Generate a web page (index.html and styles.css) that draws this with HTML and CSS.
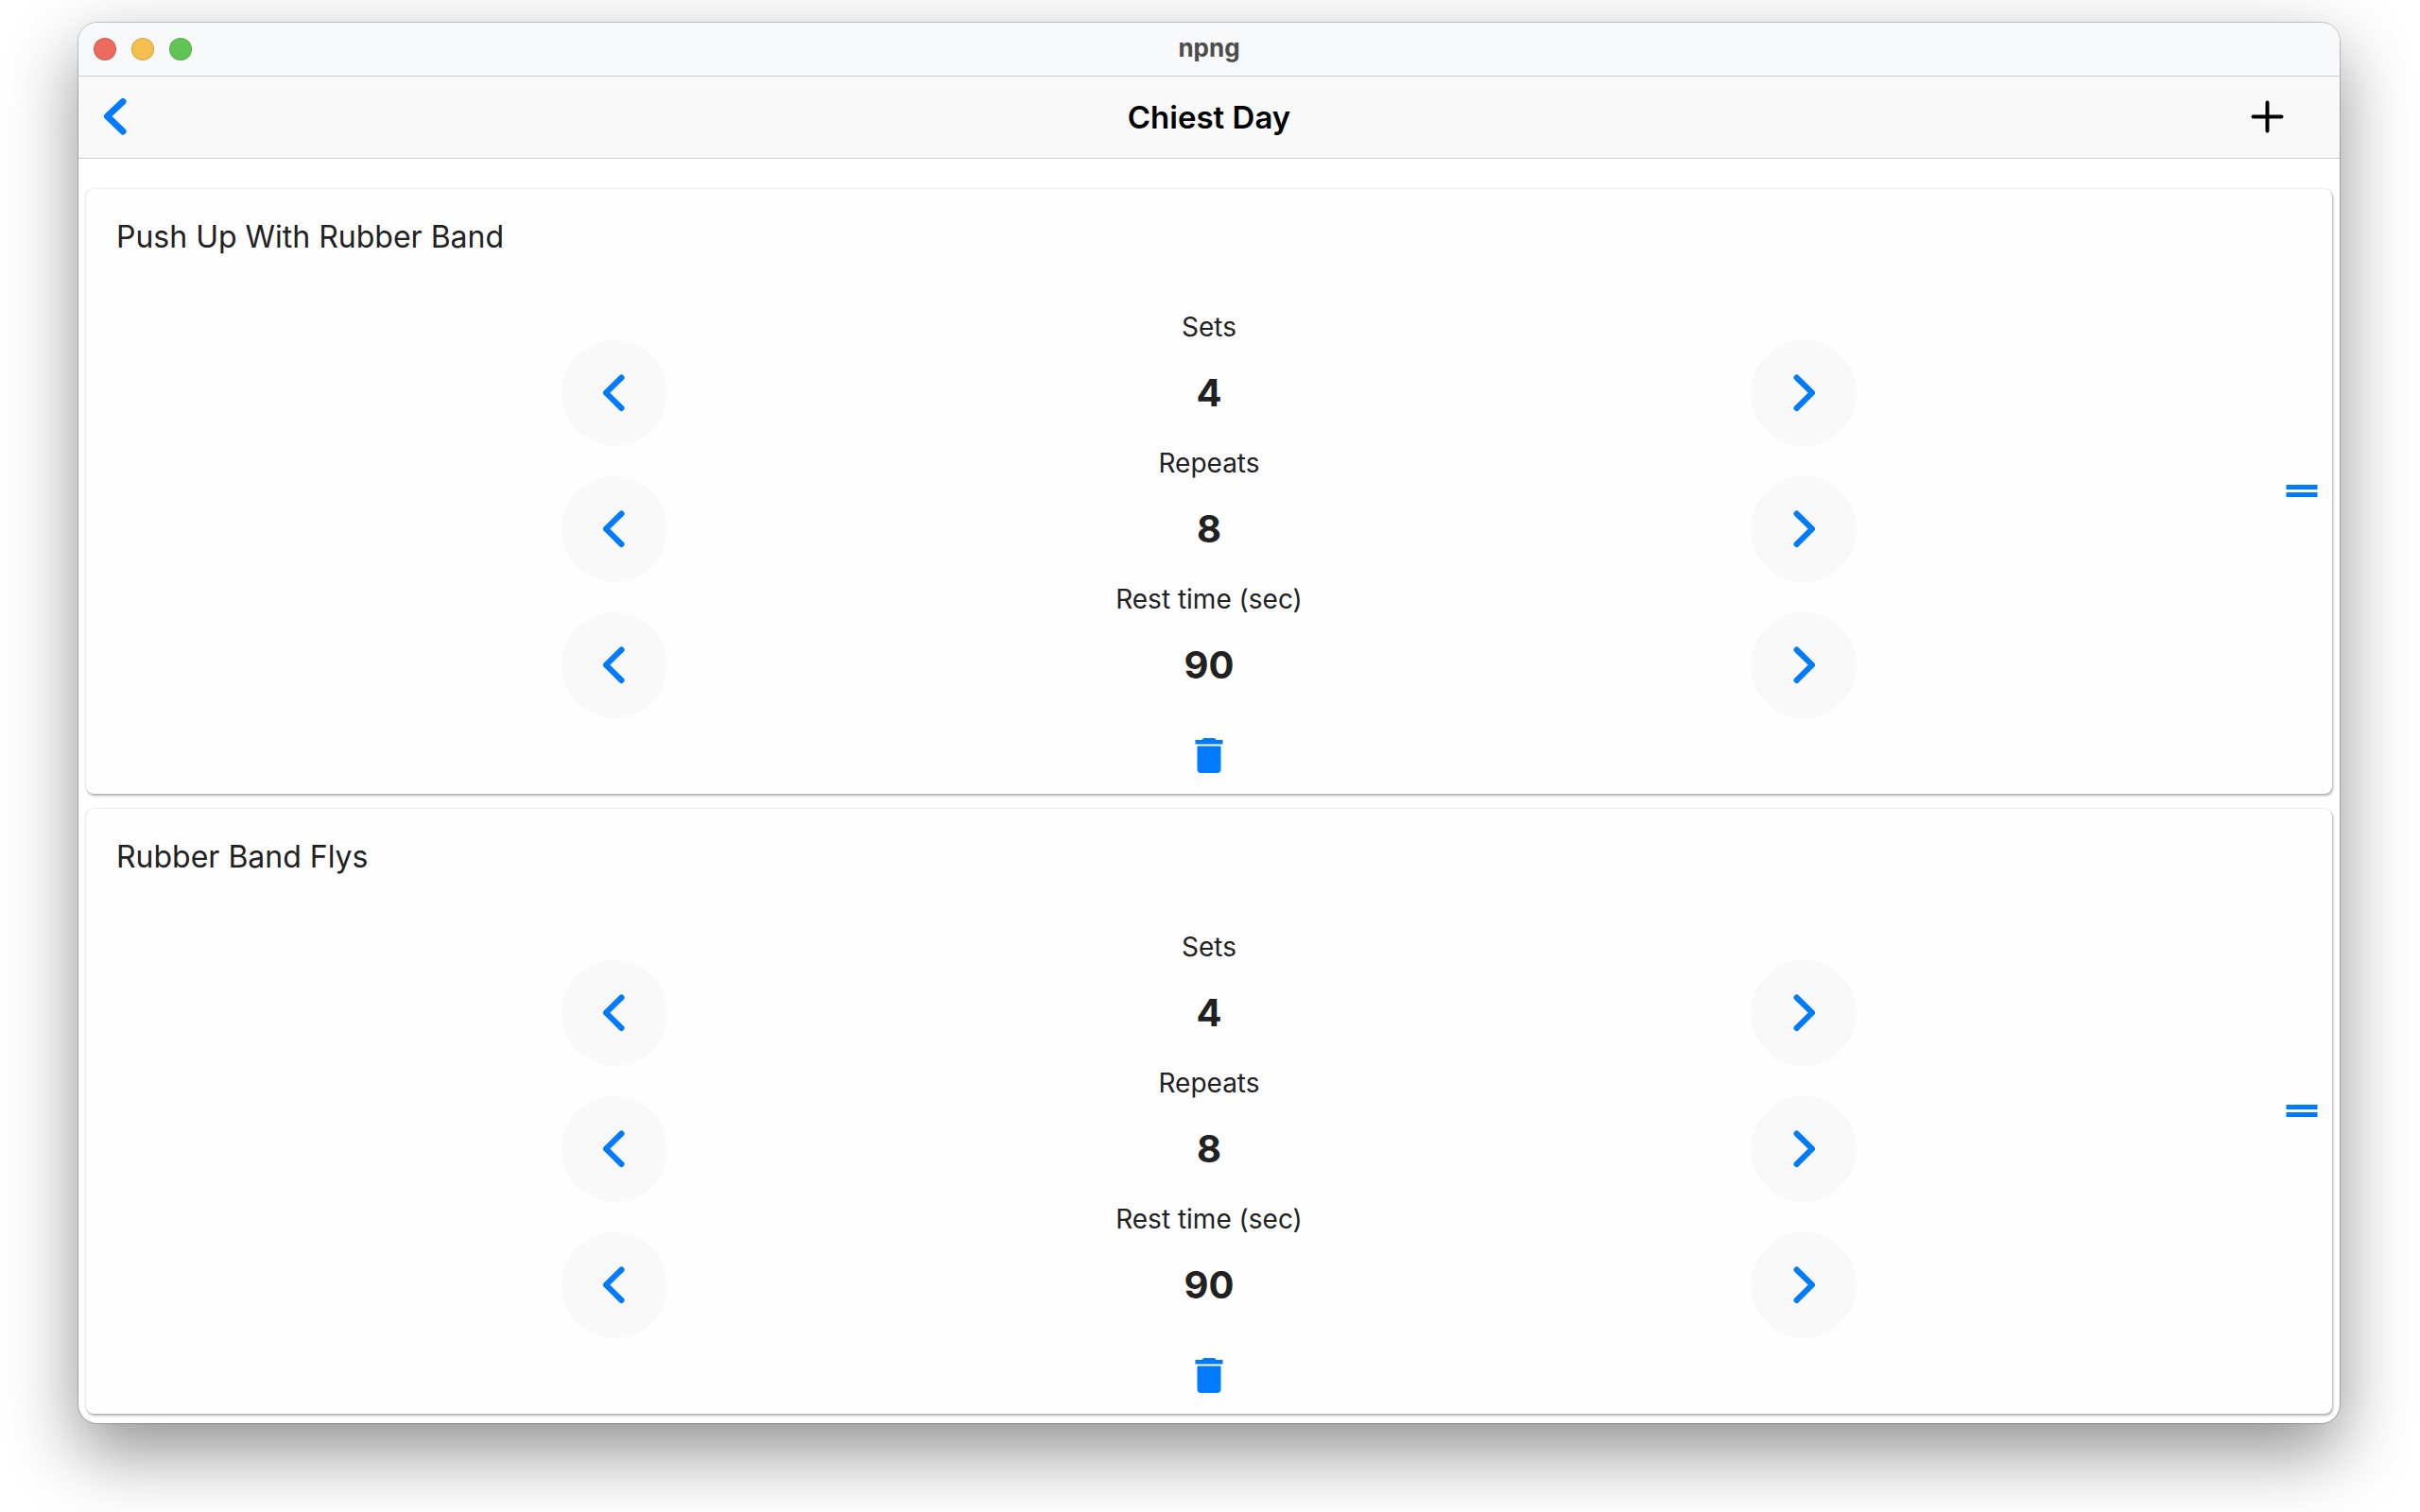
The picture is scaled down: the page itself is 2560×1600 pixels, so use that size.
FILE: index.html
```html
<!DOCTYPE html>
<html lang="en">
<head>
<meta charset="utf-8">
<meta name="viewport" content="width=device-width, initial-scale=1">
<title>npng</title>
<link rel="stylesheet" href="styles.css">
</head>
<body>
<svg class="sprite" aria-hidden="true">
  <symbol id="back" viewBox="0 0 40 40"><path d="M27 3.500 10.500 19 27 35"/></symbol>
  <symbol id="left" viewBox="0 0 40 40"><path d="M27.500 3.500 11 19.700 27.500 36"/></symbol>
  <symbol id="right" viewBox="0 0 40 40"><path d="M12.500 3.500 29 19.700 12.500 36"/></symbol>
  <symbol id="plus" viewBox="0 0 40 40"><path d="M19.500 4.500V34.500M4.500 19.500H34.500"/></symbol>
  <symbol id="trash" viewBox="0 0 40 40"><path d="M5.500 5H12.500Q13.500 3 15 3H25Q26.500 3 27.500 5H34.500V9.500H5.500ZM7.500 11.500H32.500V36Q32.500 40 28.500 40H11.500Q7.500 40 7.500 36Z"/></symbol>
  <symbol id="grip" viewBox="0 0 40 40"><path d="M3.500 13H36.500V18H3.500ZM3.500 21H36.500V26H3.500Z"/></symbol>
</svg>
<div class="window">
  <div class="titlebar">
    <div class="lights">
      <button class="light close" aria-label="Close"></button>
      <button class="light minimize" aria-label="Minimize"></button>
      <button class="light zoom" aria-label="Zoom"></button>
    </div>
    <span class="app-name">npng</span>
  </div>
  <header class="navbar">
    <button class="icon-button back" aria-label="Back"><svg class="icon stroke heavy"><use href="#back"/></svg></button>
    <h1 class="page-title">Chiest Day</h1>
    <button class="icon-button add" aria-label="Add"><svg class="icon stroke thin"><use href="#plus"/></svg></button>
  </header>
  <main class="content">
    <section class="card">
      <div class="card-body">
        <h2 class="exercise">Push Up With Rubber Band</h2>
        <div class="field-label">Sets</div>
        <div class="stepper" role="group" aria-label="Sets">
          <button class="step" aria-label="Decrease"><svg class="icon stroke"><use href="#left"/></svg></button>
          <output class="value">4</output>
          <button class="step" aria-label="Increase"><svg class="icon stroke"><use href="#right"/></svg></button>
        </div>
        <div class="field-label">Repeats</div>
        <div class="stepper" role="group" aria-label="Repeats">
          <button class="step" aria-label="Decrease"><svg class="icon stroke"><use href="#left"/></svg></button>
          <output class="value">8</output>
          <button class="step" aria-label="Increase"><svg class="icon stroke"><use href="#right"/></svg></button>
        </div>
        <div class="field-label">Rest time (sec)</div>
        <div class="stepper" role="group" aria-label="Rest time">
          <button class="step" aria-label="Decrease"><svg class="icon stroke"><use href="#left"/></svg></button>
          <output class="value">90</output>
          <button class="step" aria-label="Increase"><svg class="icon stroke"><use href="#right"/></svg></button>
        </div>
        <button class="icon-button delete" aria-label="Delete"><svg class="icon"><use href="#trash"/></svg></button>
      </div>
      <button class="icon-button handle" aria-label="Reorder"><svg class="icon"><use href="#grip"/></svg></button>
    </section>
    <section class="card">
      <div class="card-body">
        <h2 class="exercise">Rubber Band Flys</h2>
        <div class="field-label">Sets</div>
        <div class="stepper" role="group" aria-label="Sets">
          <button class="step" aria-label="Decrease"><svg class="icon stroke"><use href="#left"/></svg></button>
          <output class="value">4</output>
          <button class="step" aria-label="Increase"><svg class="icon stroke"><use href="#right"/></svg></button>
        </div>
        <div class="field-label">Repeats</div>
        <div class="stepper" role="group" aria-label="Repeats">
          <button class="step" aria-label="Decrease"><svg class="icon stroke"><use href="#left"/></svg></button>
          <output class="value">8</output>
          <button class="step" aria-label="Increase"><svg class="icon stroke"><use href="#right"/></svg></button>
        </div>
        <div class="field-label">Rest time (sec)</div>
        <div class="stepper" role="group" aria-label="Rest time">
          <button class="step" aria-label="Decrease"><svg class="icon stroke"><use href="#left"/></svg></button>
          <output class="value">90</output>
          <button class="step" aria-label="Increase"><svg class="icon stroke"><use href="#right"/></svg></button>
        </div>
        <button class="icon-button delete" aria-label="Delete"><svg class="icon"><use href="#trash"/></svg></button>
      </div>
      <button class="icon-button handle" aria-label="Reorder"><svg class="icon"><use href="#grip"/></svg></button>
    </section>
  </main>
</div>
</body>
</html>
```
FILE: styles.css
```css
* { box-sizing: border-box; }

body {
  margin: 0;
  padding: 24px 85px 94px 83px;
  background: #fff;
  color: #212121;
  font-family: Inter, "Liberation Sans", sans-serif;
}

button {
  border: 0;
  padding: 0;
  background: none;
  color: #007aff;
  cursor: pointer;
}

h1, h2 { margin: 0; }

.sprite { display: none; }

.window {
  border-radius: 20px;
  background: #fff;
  box-shadow: 0 0 0 1px rgba(0, 0, 0, 0.2), 0 30px 76px rgba(0, 0, 0, 0.44);
  overflow: hidden;
}

.titlebar, .navbar {
  display: grid;
  grid-template-columns: 1fr auto 1fr;
  align-items: center;
}

.titlebar {
  height: 57px;
  padding: 0 16px;
  background: #f8f9fb;
  border-bottom: 1px solid #cfcfcf;
}

.lights { display: flex; gap: 16px; }

.light {
  width: 24px;
  height: 24px;
  border-radius: 50%;
  border: 1px solid rgba(0, 0, 0, 0.12);
}
.close { background: #ec6a5e; }
.minimize { background: #f4bf4f; }
.zoom { background: #61c554; }

.app-name {
  padding-bottom: 2px;
  font-size: 26px;
  line-height: 32px;
  font-weight: 700;
  color: #4c4c4c;
}

.navbar {
  height: 87px;
  padding: 0 20px;
  background: #f9f9f9;
  border-bottom: 1px solid #cdcdcd;
}

.page-title {
  font-size: 33px;
  line-height: 40px;
  font-weight: 600;
  color: #000;
}

.icon { display: block; width: 40px; height: 40px; fill: currentColor; }
.stroke {
  fill: none;
  stroke: currentColor;
  stroke-width: 6px;
  stroke-linecap: round;
  stroke-linejoin: round;
}
.heavy { stroke-width: 7px; }
.thin { stroke-width: 4px; }

.back { justify-self: start; }
.add { justify-self: end; margin-right: 36px; color: #000; }

.content {
  display: flex;
  flex-direction: column;
  gap: 16px;
  padding: 32px 8px 10px;
}

.card {
  display: grid;
  border-radius: 8px;
  background: #fefefe;
  box-shadow: 1px 2px 3px rgba(0, 0, 0, 0.3), 0 0 2px rgba(0, 0, 0, 0.2);
}

.card-body, .handle { grid-area: 1 / 1; }

.card-body { display: flex; flex-direction: column; }

.exercise {
  padding: 33px 32px 59px;
  font-size: 32px;
  line-height: 36px;
  font-weight: 400;
}

.field-label {
  padding-top: 4px;
  font-size: 28px;
  line-height: 28px;
  text-align: center;
}

.stepper {
  display: flex;
  justify-content: space-evenly;
  align-items: center;
}

.step {
  display: grid;
  place-items: center;
  width: 112px;
  height: 112px;
  border-radius: 50%;
  background: #f9f9f9;
}

.value {
  width: 140px;
  font-size: 40px;
  line-height: 48px;
  font-weight: 700;
  text-align: center;
}

.delete { align-self: center; padding: 18px 20px 22px; }

.handle {
  justify-self: end;
  align-self: center;
  padding: 12px;
}
```
